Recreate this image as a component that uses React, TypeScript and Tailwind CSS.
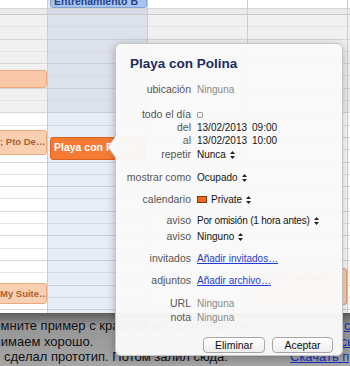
import React from 'react'

const rows = Array.from({ length: 26 }, (_, i) => i)

function DayColumn({ today = false, className, children }: { today?: boolean; className: string; children?: React.ReactNode }) {
  return (
    <div className={`relative flex shrink-0 flex-col border-r border-[#cdcdcd] ${className}`}>
      <div className={`h-[9px] shrink-0 border-b border-[#d3d3d3] ${today ? 'bg-[#e4e8f0]' : 'bg-white'}`} />
      <div className={`h-[6px] shrink-0 border-b border-[#c9c9c9] ${today ? 'bg-[#d7dbe5]' : 'bg-[#ebebeb]'}`} />
      {rows.map((i) => {
        const off = i < 8
        const bg = today ? (off ? 'bg-[#dde1ea]' : 'bg-[#e8ecf5]') : off ? 'bg-[#f0f0f0]' : 'bg-white'
        const line = today
          ? i % 2 ? 'border-[#cacfd9]' : 'border-[#d6dae4]'
          : i % 2 ? 'border-[#d6d6d6]' : 'border-[#e4e4e4]'
        return <div key={i} className={`h-[12.3px] shrink-0 border-b ${bg} ${line}`} />
      })}
      {children}
    </div>
  )
}

function UpDown() {
  return (
    <svg width="5" height="8" viewBox="0 0 5 8" className="ml-[4px] shrink-0">
      <path d="M2.5 0L5 3H0Z M2.5 8L5 5H0Z" fill="#262626" />
    </svg>
  )
}

function Row({ label, className = '', children }: { label: string; className?: string; children: React.ReactNode }) {
  return (
    <div className={`flex h-[13px] items-center ${className}`}>
      <div className="w-[75px] shrink-0 text-right text-[10.5px] text-[#555]">{label}</div>
      <div className="ml-[6px] flex items-center whitespace-nowrap text-[10px] text-[#141414]">{children}</div>
    </div>
  )
}

function Popover() {
  return (
    <div className="absolute left-[115px] top-[43px] h-[313px] w-[228px] rounded-[6px] border border-[#c6c6c6] bg-[rgba(249,249,249,0.97)] font-['Liberation_Sans',Arial,sans-serif] shadow-[0_2px_9px_rgba(0,0,0,0.28)]">
      {/* arrow toward the event */}
      <svg width="10" height="24" viewBox="0 0 10 24" className="absolute left-[-9px] top-[91px]">
        <path d="M10 0L1 12L10 24Z" fill="rgb(249,249,249)" />
        <path d="M9.5 0L1 12L9.5 24" fill="none" stroke="#c6c6c6" />
      </svg>

      <div className="pl-[14px] pt-[11px] text-[13.5px] font-bold leading-[18px] text-[#1d2c5e]">Playa con Polina</div>

      <Row label="ubicación" className="mt-[10px]">
        <span className="text-[#8a8a8a]">Ninguna</span>
      </Row>

      <Row label="todo el día" className="mt-[12px]">
        <span className="h-[6px] w-[6px] rounded-[1.5px] border border-[#8c8c8c] bg-white" />
      </Row>
      <Row label="del">
        <span>13/02/2013</span>
        <span className="ml-[5px]">09:00</span>
      </Row>
      <Row label="al">
        <span>13/02/2013</span>
        <span className="ml-[5px]">10:00</span>
      </Row>
      <Row label="repetir" className="mt-[1px]">
        <span>Nunca</span>
        <UpDown />
      </Row>

      <Row label="mostrar como" className="mt-[10px]">
        <span>Ocupado</span>
        <UpDown />
      </Row>

      <Row label="calendario" className="mt-[9px]">
        <span className="h-[7px] w-[10px] border border-[#7a3410] bg-[#f26a1c]" />
        <span className="ml-[4px]">Private</span>
        <UpDown />
      </Row>

      <Row label="aviso" className="mt-[8px]">
        <span className="tracking-[-0.2px]">Por omisión (1 hora antes)</span>
        <UpDown />
      </Row>
      <Row label="aviso" className="mt-[3px]">
        <span>Ninguno</span>
        <UpDown />
      </Row>

      <Row label="invitados" className="mt-[9px]">
        <span className="text-[#1c3cd4] underline">Añadir invitados…</span>
      </Row>

      <Row label="adjuntos" className="mt-[9px]">
        <span className="text-[#1c3cd4] underline">Añadir archivo…</span>
      </Row>

      <Row label="URL" className="mt-[10px]">
        <span className="text-[#8a8a8a]">Ninguna</span>
      </Row>
      <Row label="nota" className="mt-[1px]">
        <span className="text-[#8a8a8a]">Ninguna</span>
      </Row>

      <div className="mt-[13px] flex justify-end gap-[7px] pr-[9px]">
        <button className="h-[16px] w-[62px] rounded-[4px] border border-[#a6a6a6] bg-linear-to-b from-white to-[#eeeeee] text-[10.5px] leading-none text-[#111]">
          Eliminar
        </button>
        <button className="h-[16px] w-[61px] rounded-[4px] border border-[#a6a6a6] bg-linear-to-b from-white to-[#eeeeee] text-[10.5px] leading-none text-[#111]">
          Aceptar
        </button>
      </div>
    </div>
  )
}

function ChatWindow() {
  return (
    <div className="absolute left-0 top-[313px] h-[53px] w-[350px] overflow-hidden bg-linear-to-b from-[#5e5e5e] via-[#969696] via-25% to-[#a5a5a5] font-['Liberation_Sans',Arial,sans-serif] text-[13px] leading-[15.5px] text-[#101010]">
      <div className="flex pt-[5px]">
        <div className="w-[290px] shrink-0 overflow-hidden whitespace-nowrap">
          <div className="ml-[-16px]">Помните пример с красной кнопкой? Вот он</div>
          <div className="ml-[-23px]">Понимаем хорошо.</div>
          <div className="ml-[-9px]">Я сделал прототип. Потом залил сюда:</div>
        </div>
        <div className="whitespace-nowrap text-[#1a2fc8]">
          <div className="pl-[54px] underline">ссылка</div>
          <div className="pl-[44px] underline">ссылка</div>
          <div className="underline">Скачать прототип</div>
        </div>
      </div>
    </div>
  )
}

export default function App() {
  return (
    <div className="relative h-[366px] w-[350px] overflow-hidden bg-white font-['Liberation_Sans',Arial,sans-serif]">
      <div className="flex">
        <DayColumn className="w-[48px]">
          <div className="absolute left-[-4px] top-[70px] h-[18px] w-[51px] rounded-[3px] border border-[#eea77e] bg-[#f9c8a8]" />
          <div className="absolute left-[-4px] top-[130px] h-[25px] w-[51px] overflow-hidden whitespace-nowrap rounded-[3px] border border-[#eea77e] bg-[#f9cfb2] pl-[3px] pt-[5px] text-[9.5px] font-bold leading-[12px] text-[#b0602c]">
            ; Pto De…
          </div>
          <div className="absolute left-[-4px] top-[283px] h-[21px] w-[51px] overflow-hidden whitespace-nowrap rounded-[3px] border border-[#eea77e] bg-[#f9cfb2] pl-[3px] pt-[4px] text-[9.5px] font-bold leading-[12px] text-[#b0602c]">
            My Suite…
          </div>
        </DayColumn>
        <DayColumn today className="w-[100px]">
          <div className="absolute left-[2px] top-[-12px] h-[20px] w-[97px] overflow-hidden whitespace-nowrap rounded-[3px] border border-[#7fa3d9] bg-[#a9c5ee] pl-[3px] pt-[6px] text-[10.5px] font-bold leading-[12px] text-[#24428a]">
            Entrenamiento B
          </div>
          <div className="absolute left-[2px] top-[137px] h-[23px] w-[96px] overflow-hidden whitespace-nowrap rounded-[3px] border border-[#d9621f] bg-[#f57b35] pl-[3px] pt-[3px] text-[10.5px] font-bold leading-[12px] text-white">
            Playa con Polina
          </div>
        </DayColumn>
        <DayColumn className="w-[100px]" />
        <DayColumn className="w-[100px]">
          <div className="absolute left-[2px] top-[268px] h-[37px] w-[97px] overflow-hidden whitespace-nowrap rounded-[3px] border border-[#eb9a68] bg-[#fad3ba] pl-[3px] pt-[3px] text-[10px] font-bold leading-[12px] text-[#b0602c]">
            Reunión equipo
          </div>
        </DayColumn>
        <DayColumn className="w-[10px]" />
      </div>

      <ChatWindow />
      <Popover />
    </div>
  )
}
